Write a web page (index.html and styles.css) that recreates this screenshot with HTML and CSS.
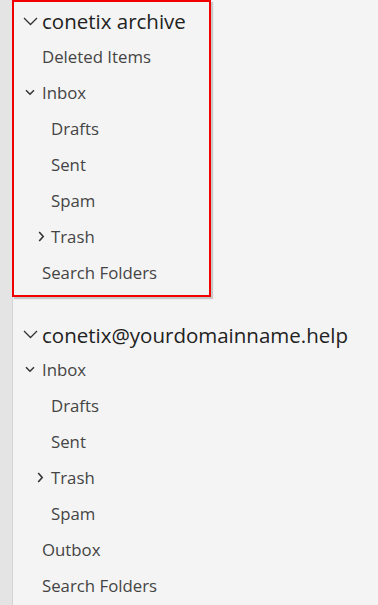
FILE: index.html
```html
<!DOCTYPE html>
<html>
<head>
<meta charset="utf-8">
<link rel="stylesheet" href="styles.css">
</head>
<body>
<div class="app">
  <div class="rail"></div>
  <div class="pane">
    <div class="group highlight">
      <div class="row account"><span class="chev"><svg width="15" height="9" viewBox="0 0 15 9"><path d="M1 1l6.5 6.5L14 1" fill="none" stroke="#333" stroke-width="1.3"/></svg></span><span>conetix archive</span></div>
      <div class="row l1"><span>Deleted Items</span></div>
      <div class="row l1"><span class="chev small"><svg width="10" height="7" viewBox="0 0 10 7"><path d="M1 1.2l4 4 4-4" fill="none" stroke="#333" stroke-width="1.5"/></svg></span><span>Inbox</span></div>
      <div class="row l2"><span>Drafts</span></div>
      <div class="row l2"><span>Sent</span></div>
      <div class="row l2"><span>Spam</span></div>
      <div class="row l2"><span class="chev right"><svg width="7" height="11" viewBox="0 0 7 11"><path d="M1.2 1l4 4.5-4 4.5" fill="none" stroke="#333" stroke-width="1.6"/></svg></span><span>Trash</span></div>
      <div class="row l1"><span>Search Folders</span></div>
    </div>
    <div class="group second">
      <div class="row account"><span class="chev"><svg width="15" height="9" viewBox="0 0 15 9"><path d="M1 1l6.5 6.5L14 1" fill="none" stroke="#333" stroke-width="1.3"/></svg></span><span>conetix@yourdomainname.help</span></div>
      <div class="row l1"><span class="chev small"><svg width="10" height="7" viewBox="0 0 10 7"><path d="M1 1.2l4 4 4-4" fill="none" stroke="#333" stroke-width="1.5"/></svg></span><span>Inbox</span></div>
      <div class="row l2"><span>Drafts</span></div>
      <div class="row l2"><span>Sent</span></div>
      <div class="row l2"><span class="chev right"><svg width="7" height="11" viewBox="0 0 7 11"><path d="M1.2 1l4 4.5-4 4.5" fill="none" stroke="#333" stroke-width="1.6"/></svg></span><span>Trash</span></div>
      <div class="row l2"><span>Spam</span></div>
      <div class="row l1"><span>Outbox</span></div>
      <div class="row l1"><span>Search Folders</span></div>
    </div>
  </div>
</div>
</body>
</html>
```
FILE: styles.css
```css
html, body { margin: 0; padding: 0; }
body {
  background: #f4f4f4;
  font-family: "Open Sans", "Noto Sans", sans-serif;
  color: #444;
  width: 378px;
  height: 605px;
  overflow: hidden;
}
.app { display: flex; height: 605px; }
.rail {
  width: 12px;
  flex: none;
  background: #e4e4e4;
  border-right: 1px solid #d4d4d4;
}
.pane { flex: 1; }
.group { display: flex; flex-direction: column; }
.highlight {
  margin-left: -1px;
  width: 195px;
  border: 2px solid #f20000;
  box-shadow: 2px 2px 1px rgba(0,0,0,0.18);
  padding-top: 1px;
  padding-bottom: 4px;
}
.second { margin-top: 20px; }
.row {
  box-sizing: border-box;
  height: 36px;
  padding-bottom: 2px;
  display: flex;
  align-items: center;
  font-size: 16.8px;
  white-space: nowrap;
  position: relative;
}
.account { font-size: 20.5px; color: #222; padding-bottom: 0; }
.second .account { height: 35px; }
.highlight .row { padding-left: 28px; }
.highlight .l2 { padding-left: 37px; }
.second .row { padding-left: 29px; }
.second .l2 { padding-left: 38px; }
.chev {
  position: absolute;
  display: flex;
  align-items: center;
}
.highlight .account .chev { left: 9px; }
.highlight .l1 .chev { left: 11px; }
.highlight .l2 .chev { left: 24px; }
.second .account .chev { left: 10px; }
.second .l1 .chev { left: 12px; }
.second .l2 .chev { left: 24px; }
.chev svg { display: block; }
```
